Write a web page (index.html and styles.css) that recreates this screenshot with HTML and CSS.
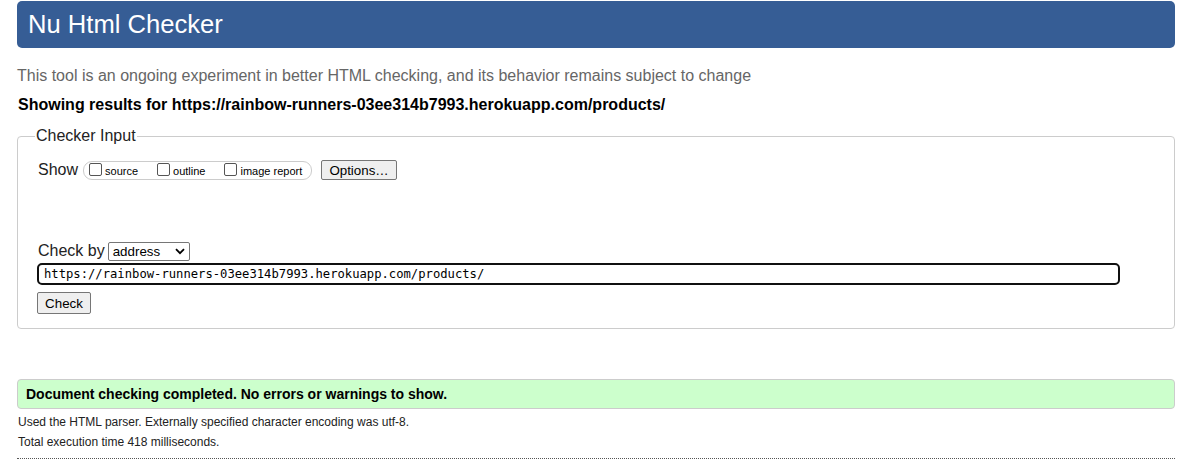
FILE: index.html
```html
<!DOCTYPE html>
<html>
<head>
<meta charset="utf-8">
<title>Nu Html Checker</title>
<link rel="stylesheet" href="styles.css">
</head>
<body>
<div class="page">
  <h1 class="banner">Nu Html Checker</h1>
  <p class="tagline">This tool is an ongoing experiment in better HTML checking, and its behavior remains subject to change</p>
  <p class="showing">Showing results for https://rainbow-runners-03ee314b7993.herokuapp.com/products/</p>
  <fieldset class="checker">
    <legend class="legend">Checker Input</legend>
    <div class="show-row">
      <span class="label">Show</span>
      <span class="opts">
        <label class="opt"><span class="cb"></span>source</label>
        <label class="opt"><span class="cb"></span>outline</label>
        <label class="opt"><span class="cb"></span>image report</label>
      </span>
      <span class="btn options">Options…</span>
    </div>
    <div class="checkby-row">
      <span class="label">Check by</span>
      <span class="select">address<svg class="chev" width="10" height="7" viewBox="0 0 10 7"><path d="M1 1.2 L5 5.2 L9 1.2" fill="none" stroke="#000" stroke-width="1.8"/></svg></span>
    </div>
    <div class="url">https://rainbow-runners-03ee314b7993.herokuapp.com/products/</div>
    <div class="check-row"><span class="btn check">Check</span></div>
  </fieldset>
  <div class="success">Document checking completed. No errors or warnings to show.</div>
  <p class="details">Used the HTML parser. Externally specified character encoding was utf-8.</p>
  <p class="details">Total execution time 418 milliseconds.</p>
  <div class="rule"></div>
</div>
</body>
</html>
```

FILE: styles.css
```css
html, body {
  margin: 0;
  padding: 0;
  background: #fff;
}
body {
  font-family: "Liberation Sans", Arial, sans-serif;
  color: #000;
}
.page {
  width: 1158px;
  margin-left: 17px;
  padding-top: 1px;
}
.banner {
  margin: 0;
  height: 47px;
  box-sizing: border-box;
  background: #365d95;
  color: #fff;
  border-radius: 5px;
  font-weight: normal;
  font-size: 25.6px;
  line-height: 47px;
  padding-left: 11px;
}
.tagline {
  margin: 0;
  margin-top: 18px;
  font-size: 16px;
  line-height: 20px;
  color: #666;
}
.showing {
  margin: 0;
  margin-top: 9px;
  padding-left: 1px;
  font-size: 16px;
  line-height: 20px;
  font-weight: bold;
}
.checker {
  margin: 12px 0 0 0;
  border: 1px solid #ccc;
  border-radius: 4px;
  padding: 15px 20px 13px 19px;
  min-width: 0;
  box-sizing: border-box;
  height: 202px;
}
.legend {
  padding: 0 1px;
  margin-left: -2px;
  font-size: 16px;
  line-height: 18px;
  color: #222;
}
.show-row {
  display: flex;
  align-items: center;
  height: 20px;
  padding-left: 1px;
}
.label {
  font-size: 16px;
  line-height: 20px;
  color: #222;
}
.opts {
  display: flex;
  align-items: center;
  margin-left: 5px;
  height: 19px;
  box-sizing: border-box;
  width: 229px;
  border: 1px solid #ccc;
  border-radius: 9px;
  padding-left: 5px;
  gap: 0;
}
.opt {
  display: flex;
  align-items: center;
  font-size: 11px;
  line-height: 13px;
  color: #000;
  margin-right: 19px;
  padding-top: 2px;
}
.opt:last-child { margin-right: 0; }
.cb {
  width: 11px;
  height: 11px;
  border: 1px solid #555;
  border-radius: 2px;
  margin-right: 3px;
  margin-top: -4px;
  background: #fff;
}
.btn {
  display: inline-flex;
  align-items: center;
  justify-content: center;
  box-sizing: border-box;
  border: 1px solid #767676;
  border-radius: 2px;
  background: #efefef;
  font-size: 13.33px;
  color: #000;
}
.options {
  margin-left: 9px;
  width: 76px;
  height: 20px;
}
.checkby-row {
  display: flex;
  align-items: center;
  margin-top: 61px;
  height: 20px;
  padding-left: 1px;
}
.select {
  display: inline-flex;
  align-items: center;
  justify-content: space-between;
  box-sizing: border-box;
  width: 82px;
  height: 19px;
  margin-left: 3px;
  border: 1px solid #767676;
  border-radius: 2px;
  padding: 0 4px 0 4px;
  font-size: 13.33px;
  background: #fff;
}
.chev { display: block; }
.url {
  margin-top: 2px;
  width: 1083px;
  height: 22px;
  box-sizing: border-box;
  border: 2px solid #101010;
  border-radius: 5px;
  padding-left: 5px;
  font-family: "DejaVu Sans Mono", "Liberation Mono", monospace;
  font-size: 12.2px;
  line-height: 18px;
  color: #000;
}
.check-row {
  margin-top: 7px;
  display: flex;
}
.check {
  width: 54px;
  height: 22px;
}
.success {
  margin-top: 50px;
  height: 30px;
  box-sizing: border-box;
  background: #ccffcc;
  border: 1px solid #ccc;
  border-radius: 4px;
  padding-left: 8px;
  font-size: 14px;
  font-weight: bold;
  line-height: 28px;
}
.details {
  margin: 0;
  padding-left: 1px;
  font-size: 12px;
  line-height: 20px;
  color: #222;
}
.success + .details { margin-top: 3px; }
.rule {
  margin-top: 6px;
  border-top: 1px dotted #555;
}
```
